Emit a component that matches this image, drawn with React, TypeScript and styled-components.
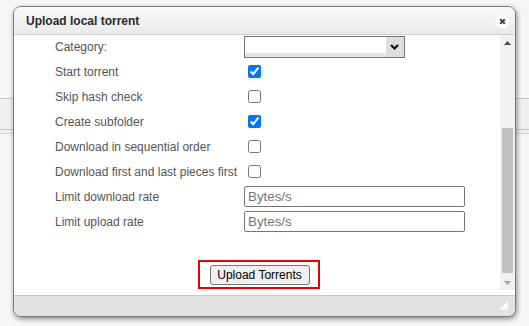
import styled, { createGlobalStyle } from "styled-components";

const GlobalStyle = createGlobalStyle`
  html, body {
    margin: 0;
    padding: 0;
  }
  body {
    background: #f6f6f6;
    font-family: "Liberation Sans", Arial, sans-serif;
  }
`;

const Page = styled.div`
  position: relative;
  width: 529px;
  height: 326px;
  overflow: hidden;
`;

const Header = styled.div`
  height: 98px;
  background: #f6f6f6;
  border-bottom: 1px solid #c4c4c4;
`;

const Toolbar = styled.div`
  height: 30px;
  background: #f0f0f0;
  border-bottom: 1px solid #c4c4c4;
`;

const Strip = styled.div`
  height: 3px;
  background: #eeeeee;
  border-bottom: 1px solid #d4d4d4;
`;

const Backdrop = styled.div`
  height: 200px;
  background: #f6f6f6;
`;

const Window = styled.div`
  position: absolute;
  left: 13px;
  top: 6px;
  width: 503px;
  height: 311px;
  box-sizing: border-box;
  border: 1px solid #7a7a7a;
  border-radius: 8px;
  box-shadow: 1px 2px 5px rgba(0, 0, 0, 0.45);
  background: #fff;
  display: flex;
  flex-direction: column;
  overflow: hidden;
`;

const TitleBar = styled.div`
  flex: none;
  height: 27px;
  display: flex;
  align-items: center;
  justify-content: space-between;
  padding: 0 5px 0 12px;
  background: linear-gradient(#f8f8f8, #eaeaea);
  border-bottom: 1px solid #d0d0d0;
`;

const Title = styled.h3`
  margin: 0;
  font-size: 12px;
  font-weight: 700;
  color: #2a2a2a;
`;

const CloseButton = styled.button`
  width: 15px;
  height: 15px;
  margin-top: 1px;
  padding: 0;
  border: 0;
  background: none;
  display: flex;
`;

const Body = styled.div`
  flex: 1;
  display: flex;
  padding-bottom: 5px;
  background: #fff;
  min-height: 0;
`;

const Panel = styled.div`
  flex: 1;
  overflow: hidden;
`;

const ScrollRail = styled.div`
  flex: none;
  width: 15px;
  background: #f1f1f1;
  display: flex;
  flex-direction: column;
`;

const RailButton = styled.div`
  flex: none;
  height: 15px;
  display: flex;
  align-items: center;
  justify-content: center;
`;

const RailTrack = styled.div`
  flex: 1;
`;

const Thumb = styled.div<{ $offset: number; $size: number }>`
  margin: ${({ $offset }) => $offset}px 2px 0;
  height: ${({ $size }) => $size}px;
  background: #c1c1c1;
`;

const Form = styled.div`
  margin: -1px 0 0 41px;
`;

const Row = styled.div`
  display: grid;
  grid-template-columns: 189px auto;
  height: 25px;
  align-items: center;
`;

const Label = styled.label`
  font-size: 12px;
  color: #555;
  white-space: nowrap;
`;

const Field = styled.div`
  display: flex;
  align-items: center;
`;

const Checkbox = styled.input.attrs({ type: "checkbox" })`
  width: 13px;
  height: 13px;
  margin: 0 0 0 4px;
`;

const TextInput = styled.input`
  box-sizing: border-box;
  width: 221px;
  height: 21px;
  padding: 1px 3px;
  border: 1px solid #767676;
  border-radius: 2px;
  font: 13.33px "Liberation Sans", Arial, sans-serif;
  color: #000;

  &::placeholder {
    color: #757575;
  }
`;

const SelectWrap = styled.div`
  position: relative;
  display: inline-flex;
`;

const Select = styled.select`
  appearance: none;
  box-sizing: border-box;
  width: 161px;
  height: 22px;
  border: 1px solid #767676;
  border-radius: 0;
  background:
    linear-gradient(to left, #dedede 18px, transparent 18px),
    linear-gradient(to top, #e6e6e6 4px, #fff 4px);
  font: 13.33px "Liberation Sans", Arial, sans-serif;
`;

const Chevron = styled.svg`
  position: absolute;
  right: 6px;
  top: 8px;
  pointer-events: none;
`;

const Actions = styled.div`
  display: flex;
  justify-content: center;
  margin-top: 26px;
  padding-left: 3px;
`;

const Highlight = styled.div`
  border: 2px solid #e60000;
  padding: 3px 8px 2px 10px;
`;

const SubmitButton = styled.button`
  width: 100px;
  height: 20px;
  padding: 0;
  border: 1px solid #767676;
  border-radius: 3px;
  background: #efefef;
  color: #000;
  font: 12px "Liberation Sans", Arial, sans-serif;
`;

const Footer = styled.div`
  flex: none;
  height: 21px;
  box-sizing: border-box;
  border-top: 1px solid #c8c8c8;
  background: #e2e2e2;
  display: flex;
  justify-content: flex-end;
  align-items: flex-end;
  padding: 0 7px 6px 0;
`;

type TRow = {
  label: string;
  kind: "check" | "text" | "select";
  checked?: boolean;
};

const rows: TRow[] = [
  { label: "Category:", kind: "select" },
  { label: "Start torrent", kind: "check", checked: true },
  { label: "Skip hash check", kind: "check" },
  { label: "Create subfolder", kind: "check", checked: true },
  { label: "Download in sequential order", kind: "check" },
  { label: "Download first and last pieces first", kind: "check" },
  { label: "Limit download rate", kind: "text" },
  { label: "Limit upload rate", kind: "text" },
];

const renderField = (row: TRow) => {
  if (row.kind === "check") {
    return <Checkbox defaultChecked={row.checked} />;
  }
  if (row.kind === "select") {
    return (
      <SelectWrap>
        <Select defaultValue="">
          <option value=""></option>
        </Select>
        <Chevron width="9" height="6" viewBox="0 0 9 6">
          <path d="M1 1 L4.5 4.5 L8 1" fill="none" stroke="#111" strokeWidth="2.2" />
        </Chevron>
      </SelectWrap>
    );
  }
  return <TextInput placeholder="Bytes/s" />;
};

export default function App() {
  return (
    <Page>
      <GlobalStyle />
      <Header />
      <Toolbar />
      <Strip />
      <Backdrop />

      <Window>
        <TitleBar>
          <Title>Upload local torrent</Title>
          <CloseButton aria-label="Close">
            <svg width="15" height="15" viewBox="0 0 15 15">
              <circle cx="7.5" cy="7.5" r="7" fill="#fff" />
              <path d="M5.2 5.2 L9.8 9.8 M9.8 5.2 L5.2 9.8" stroke="#444" strokeWidth="2" />
            </svg>
          </CloseButton>
        </TitleBar>

        <Body>
          <Panel>
            <Form>
              {rows.map((row) => (
                <Row key={row.label}>
                  <Label>{row.label}</Label>
                  <Field>{renderField(row)}</Field>
                </Row>
              ))}
            </Form>
            <Actions>
              <Highlight>
                <SubmitButton>Upload Torrents</SubmitButton>
              </Highlight>
            </Actions>
          </Panel>

          <ScrollRail>
            <RailButton>
              <svg width="7" height="4" viewBox="0 0 7 4">
                <polygon points="0,4 3.5,0 7,4" fill="#505050" />
              </svg>
            </RailButton>
            <RailTrack>
              <Thumb $offset={78} $size={145} />
            </RailTrack>
            <RailButton>
              <svg width="7" height="4" viewBox="0 0 7 4">
                <polygon points="0,0 7,0 3.5,4" fill="#a3a3a3" />
              </svg>
            </RailButton>
          </ScrollRail>
        </Body>

        <Footer>
          <svg width="9" height="9" viewBox="0 0 9 9">
            <polygon points="9,0 9,9 0,9" fill="#fafafa" />
          </svg>
        </Footer>
      </Window>
    </Page>
  );
}
